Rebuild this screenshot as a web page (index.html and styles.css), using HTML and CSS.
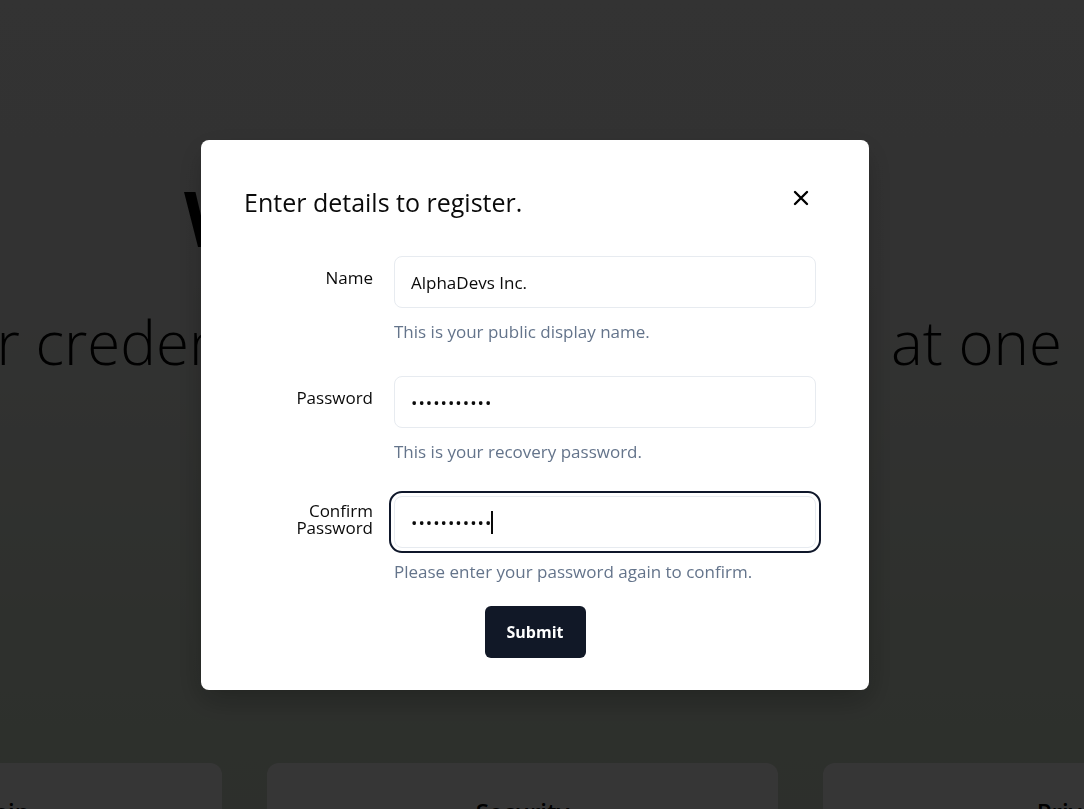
FILE: index.html
```html
<!DOCTYPE html>
<html lang="en">
<head>
<meta charset="utf-8">
<title>Register</title>
<link rel="stylesheet" href="styles.css">
</head>
<body>
  <main class="page">
    <section class="hero">
      <h1 class="hero-title">Welcome to Vault</h1>
      <div class="hero-sub"><p>your credentials, password and files&#8194;at one</p></div>
    </section>
    <section class="features">
      <div class="feature"><h3>Ownership</h3></div>
      <div class="feature"><h3>Security</h3></div>
      <div class="feature"><h3>Privacy</h3></div>
    </section>
  </main>

  <div class="overlay"></div>

  <div class="dialog" role="dialog" aria-labelledby="dlg-title">
    <div class="dialog-header">
      <h2 id="dlg-title" class="dialog-title">Enter details to register.</h2>
      <button class="close-btn" aria-label="Close">
        <svg width="16" height="16" viewBox="0 0 16 16" fill="none" stroke="#000" stroke-width="2.4" stroke-linecap="round"><path d="M2 2L14 14M14 2L2 14"/></svg>
      </button>
    </div>
    <form class="form">
      <div class="field">
        <label class="label" for="name">Name</label>
        <div class="input-box">
          <input class="input" id="name" type="text" value="AlphaDevs Inc.">
        </div>
        <p class="desc">This is your public display name.</p>
      </div>
      <div class="field">
        <label class="label" for="pw">Password</label>
        <div class="input-box">
          <input class="input input-secret" id="pw" type="password" value="abcdefghijk">
        </div>
        <p class="desc">This is your recovery password.</p>
      </div>
      <div class="field">
        <label class="label label-wrap" for="pw2">Confirm Password</label>
        <div class="input-box">
          <input class="input input-secret input-focused" id="pw2" type="password" value="abcdefghijk">
          <span class="caret"></span>
        </div>
        <p class="desc">Please enter your password again to confirm.</p>
      </div>
      <button type="button" class="submit">Submit</button>
    </form>
  </div>
</body>
</html>
```
FILE: styles.css
```css
* { box-sizing: border-box; }

html, body {
  margin: 0;
  padding: 0;
  height: 100%;
}

body {
  font-family: "Open Sans", "Noto Sans", "Liberation Sans", sans-serif;
  color: #000;
  overflow: hidden;
  background: linear-gradient(to bottom, #eeeeee 0%, #ececec 35%, #d8e2d3 80%, #d4dfcf 100%);
}

.page {
  width: 1045px;
  padding-top: 170px;
}

.hero {
  display: flex;
  flex-direction: column;
  align-items: center;
}

.hero-title {
  margin: 0;
  font-size: 77px;
  font-weight: 700;
  line-height: 96px;
  white-space: nowrap;
}

.hero-sub {
  align-self: stretch;
  width: 1084px;
  display: flex;
  justify-content: flex-end;
  padding-right: 22px;
  margin-top: 36px;
}

.hero-sub p {
  margin: 0;
  white-space: nowrap;
  font-size: 60px;
  font-weight: 300;
  line-height: 80px;
}

.features {
  display: flex;
  justify-content: center;
  gap: 45px;
  margin-top: 381px;
}

.feature {
  flex: 0 0 511px;
  height: 200px;
  background: #ffffff;
  border-radius: 12px;
  padding-top: 32px;
  text-align: center;
}

.feature h3 {
  margin: 0;
  font-size: 24px;
  font-weight: 600;
}

.overlay {
  position: fixed;
  inset: 0;
  background: rgba(0, 0, 0, 0.79);
}

.dialog {
  position: fixed;
  left: 201px;
  top: 140px;
  width: 668px;
  height: 550px;
  background: #fff;
  border-radius: 8px;
  padding: 46px 43px 32px 43px;
  box-shadow: 0 10px 30px rgba(0, 0, 0, 0.25);
}

.dialog-header {
  display: flex;
  justify-content: space-between;
  align-items: center;
}

.dialog-title {
  margin: 0;
  font-size: 25px;
  font-weight: 400;
  line-height: 32px;
  color: #0a0a0a;
}

.close-btn {
  width: 24px;
  height: 24px;
  margin: 0 13px 8px 0;
  padding: 0;
  border: 0;
  background: transparent;
  display: flex;
  align-items: center;
  justify-content: center;
}

.form {
  display: flex;
  flex-direction: column;
  gap: 32px;
  margin-top: 38px;
}

.field {
  display: grid;
  grid-template-columns: 129px 422px;
  column-gap: 21px;
  row-gap: 12px;
  align-items: center;
}

.label {
  grid-column: 1;
  grid-row: 1;
  justify-self: end;
  text-align: right;
  font-size: 17px;
  font-weight: 500;
  line-height: 17px;
  color: #0a0a0a;
  padding-bottom: 9px;
}

.label-wrap {
  max-width: 90px;
  padding-bottom: 7px;
}

.input-box {
  grid-column: 2;
  grid-row: 1;
  position: relative;
  height: 52px;
}

.input {
  display: block;
  height: 52px;
  width: 422px;
  border: 1px solid #e7ebf0;
  border-radius: 8px;
  padding: 0 16px;
  font-family: inherit;
  font-size: 17px;
  color: #0a0a0a;
  background: #fff;
  outline: none;
}

.input-secret {
  letter-spacing: 1px;
}

.input-focused {
  outline: 2px solid #0f172a;
  outline-offset: 3px;
}

.caret {
  position: absolute;
  left: 97px;
  top: 15px;
  width: 2px;
  height: 23px;
  background: #0a0a0a;
}

.desc {
  grid-column: 2;
  grid-row: 2;
  margin: 0;
  font-size: 17px;
  line-height: 24px;
  color: #64748b;
}

.submit {
  align-self: center;
  margin-top: -10px;
  width: 101px;
  height: 52px;
  border: 0;
  border-radius: 6px;
  background: #111827;
  color: #fff;
  font-family: inherit;
  font-size: 16px;
  font-weight: 700;
}
```
